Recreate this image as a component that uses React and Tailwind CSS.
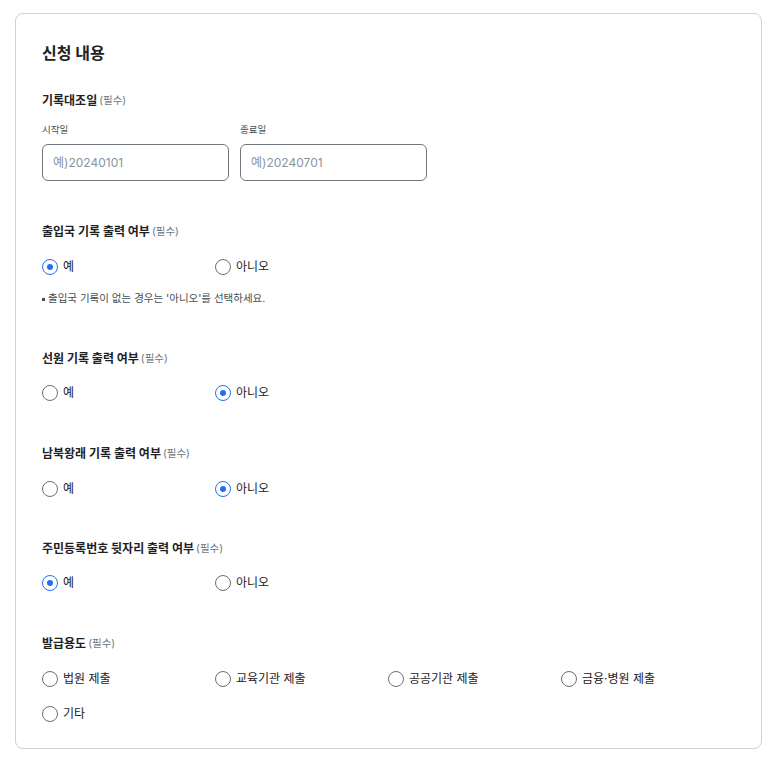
import React from "react";

function Radio({ checked, label }) {
  return (
    <label className="flex items-center gap-[5px] h-6 cursor-pointer">
      {checked ? (
        <span className="w-4 h-4 rounded-full border-[1.5px] border-[#256ef4] flex items-center justify-center shrink-0">
          <span className="w-[6px] h-[6px] rounded-full bg-[#256ef4]" />
        </span>
      ) : (
        <span className="w-4 h-4 rounded-full border-[1.5px] border-[#6f6f6f] bg-white shrink-0" />
      )}
      <span className="text-[12px] text-[#1e2124] leading-5">{label}</span>
    </label>
  );
}

function Label({ children, className = "" }) {
  return (
    <div className={"h-5 flex items-center gap-[2px] " + className}>
      <span className="text-[12px] font-bold text-[#1e2124]">{children}</span>
      <span className="text-[10.5px] text-[#6d7882]">(필수)</span>
    </div>
  );
}

function Row({ children, className = "" }) {
  return <div className={"grid grid-cols-4 w-[692px] " + className}>{children}</div>;
}

export default function App() {
  return (
    <div className="min-h-screen bg-white font-['Inter','Noto_Sans_CJK_KR',sans-serif] pt-[13px] px-[15px]">
      <div className="w-[747px] border border-[#cdd1d5] rounded-[8px] pt-[27px] pb-[22px] px-[26px] flex flex-col">
        <h2 className="h-6 flex items-center text-[16px] font-bold text-[#1e2124]">신청 내용</h2>

        <Label className="mt-[26px]">기록대조일</Label>
        <div className="flex gap-[11px] mt-[11px]">
          <div className="flex flex-col w-[187px]">
            <div className="h-4 flex items-center text-[9.5px] text-[#464c53]">시작일</div>
            <input
              className="mt-[6px] h-[37px] w-full border border-[#6f767e] rounded-[6px] px-[10px] text-[12px] placeholder:text-[#8a949e] outline-none"
              placeholder="예)20240101"
            />
          </div>
          <div className="flex flex-col w-[187px]">
            <div className="h-4 flex items-center text-[9.5px] text-[#464c53]">종료일</div>
            <input
              className="mt-[6px] h-[37px] w-full border border-[#6f767e] rounded-[6px] px-[10px] text-[12px] placeholder:text-[#8a949e] outline-none"
              placeholder="예)20240701"
            />
          </div>
        </div>

        <Label className="mt-[41px]">출입국 기록 출력 여부</Label>
        <Row className="mt-[13px]">
          <Radio checked label="예" />
          <Radio label="아니오" />
        </Row>
        <div className="mt-[12px] h-4 flex items-center text-[10.5px] text-[#464c53]">
          <span className="mr-[3px] w-[3px] h-[3px] bg-[#464c53]" />출입국 기록이 없는 경우는 '아니오'를 선택하세요.
        </div>

        <Label className="mt-[42px]">선원 기록 출력 여부</Label>
        <Row className="mt-[12px]">
          <Radio label="예" />
          <Radio checked label="아니오" />
        </Row>

        <Label className="mt-[39px]">남북왕래 기록 출력 여부</Label>
        <Row className="mt-[13px]">
          <Radio label="예" />
          <Radio checked label="아니오" />
        </Row>

        <Label className="mt-[38px]">주민등록번호 뒷자리 출력 여부</Label>
        <Row className="mt-[12px]">
          <Radio checked label="예" />
          <Radio label="아니오" />
        </Row>

        <Label className="mt-[39px]">발급용도</Label>
        <Row className="mt-[13px] gap-y-[11px]">
          <Radio label="법원 제출" />
          <Radio label="교육기관 제출" />
          <Radio label="공공기관 제출" />
          <Radio label="금융·병원 제출" />
          <Radio label="기타" />
        </Row>
      </div>
    </div>
  );
}
